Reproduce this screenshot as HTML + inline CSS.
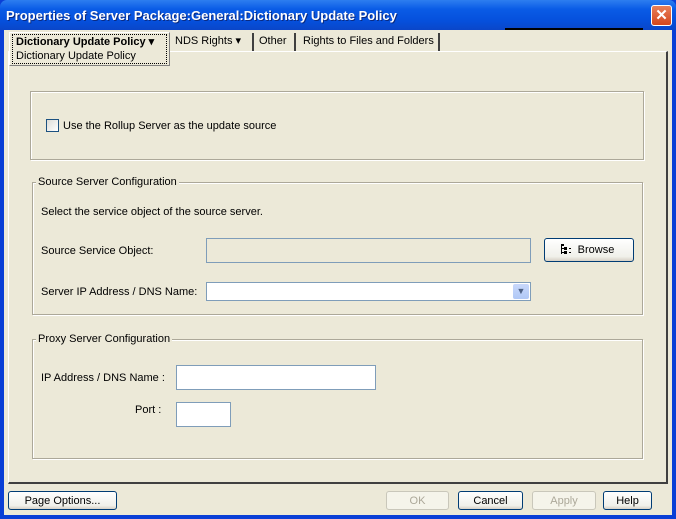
<!DOCTYPE html>
<html><head><style>
*{box-sizing:border-box;margin:0;padding:0}
body{width:676px;height:519px;overflow:hidden;background:#0a3fd6;font-family:"Liberation Sans",Tahoma,sans-serif;font-size:11px;color:#000;position:relative}
.a{position:absolute}
#title{left:0;top:0;width:676px;height:30px;background:linear-gradient(#2d7ef0,#0a5ce6 30%,#0550dc 70%,#0a46c8);border-radius:7px 7px 0 0}
#title span{position:absolute;left:6px;top:8px;color:#fff;font-weight:bold;font-size:13px;text-shadow:1px 1px #0a2a80}
#close{left:651px;top:5px;width:21px;height:21px;border:1px solid #fff;border-radius:3px;background:linear-gradient(#e8805a,#d5461c);color:#fff;font-size:15px;font-weight:bold;text-align:center;line-height:19px}
#body{left:4px;top:30px;width:668px;height:485px;background:#ece9d8}
.panel{left:8px;top:51px;width:660px;height:433px;border-top:1px solid #fff;border-left:1px solid #fff;border-right:2px solid #404040;border-bottom:2px solid #404040}
.box{border:1px solid #aca899;box-shadow:1px 1px 0 #fff inset,1px 1px 0 #fff}
.lg{background:#ece9d8;padding:0 2px}
.in{background:#fff;border:1px solid #7f9db9}
.btn{border:1px solid #003c74;border-radius:3px;background:linear-gradient(#fff,#f0f0ea 80%,#d6d0c5);text-align:center;line-height:18px}
.dis{border-color:#c9c7ba;color:#aca899;background:#f5f4ea}
.tab{top:33px;height:18px;line-height:16px;border-right:2px solid #404040;padding-left:5px}
</style></head><body>
<div class="a" id="title"><span>Properties of Server Package:General:Dictionary Update Policy</span></div>
<div class="a" id="close">✕</div>
<div class="a" id="body"></div>
<div class="a" style="left:505px;top:28px;width:138px;height:2px;background:#000"></div>
<div class="a panel"></div>
<div class="a" style="left:9px;top:32px;width:161px;height:34px;background:#ece9d8;border:1px solid #fff;border-right:1px solid #808080;border-bottom:1px solid #808080"></div>
<div class="a" style="left:12px;top:34px;width:155px;height:30px;border:1px dotted #000"></div>
<div class="a" style="left:16px;top:35px;font-weight:bold">Dictionary Update Policy ▾</div>
<div class="a" style="left:16px;top:50px">Dictionary Update Policy</div>
<div class="a tab" style="left:170px;width:84px">NDS Rights ▾</div>
<div class="a tab" style="left:254px;width:42px">Other</div>
<div class="a tab" style="left:298px;width:142px">Rights to Files and Folders</div>

<div class="a box" style="left:30px;top:91px;width:614px;height:69px"></div>
<div class="a" style="left:46px;top:119px;width:13px;height:13px;border:1px solid #1c5180;background:linear-gradient(135deg,#dcdcd7,#fff)"></div>
<div class="a" style="left:63px;top:120px">Use the Rollup Server as the update source</div>

<div class="a box" style="left:32px;top:182px;width:611px;height:133px"></div>
<div class="a lg" style="left:36px;top:176px">Source Server Configuration</div>
<div class="a" style="left:41px;top:206px">Select the service object of the source server.</div>
<div class="a" style="left:41px;top:245px">Source Service Object:</div>
<div class="a in" style="left:206px;top:238px;width:325px;height:25px;background:#ece9d8"></div>
<div class="a btn" style="left:544px;top:238px;width:90px;height:24px;line-height:22px;padding-left:14px">Browse</div>
<svg class="a" style="left:561px;top:244px" width="12" height="11" viewBox="0 0 12 11"><path d="M0 0h3v2H0zM0 1h1v9H0zM1 4h2M1 8h2M3 3h3v3H3zM3 7h3v3H3zM8 4h2v1H8zM8 8h2v1H8z" fill="#000" stroke="none"/><path d="M1 4.5h2M1 8.5h2" stroke="#000"/></svg>
<div class="a" style="left:41px;top:286px">Server IP Address / DNS Name:</div>
<div class="a in" style="left:206px;top:282px;width:325px;height:19px"></div>
<div class="a" style="left:513px;top:284px;width:16px;height:15px;background:linear-gradient(#c8d8fb,#b0c8f6);border-radius:2px;color:#4d6185;font-size:9px;text-align:center;line-height:15px">▼</div>

<div class="a box" style="left:32px;top:339px;width:611px;height:120px"></div>
<div class="a lg" style="left:36px;top:333px">Proxy Server Configuration</div>
<div class="a" style="left:41px;top:372px">IP Address / DNS Name :</div>
<div class="a in" style="left:176px;top:365px;width:200px;height:25px"></div>
<div class="a" style="left:135px;top:404px">Port :</div>
<div class="a in" style="left:176px;top:402px;width:55px;height:25px"></div>

<div class="a btn" style="left:8px;top:491px;width:109px;height:19px">Page Options...</div>
<div class="a btn dis" style="left:386px;top:491px;width:63px;height:19px">OK</div>
<div class="a btn" style="left:458px;top:491px;width:65px;height:19px">Cancel</div>
<div class="a btn dis" style="left:532px;top:491px;width:64px;height:19px">Apply</div>
<div class="a btn" style="left:603px;top:491px;width:49px;height:19px">Help</div>
</body></html>
